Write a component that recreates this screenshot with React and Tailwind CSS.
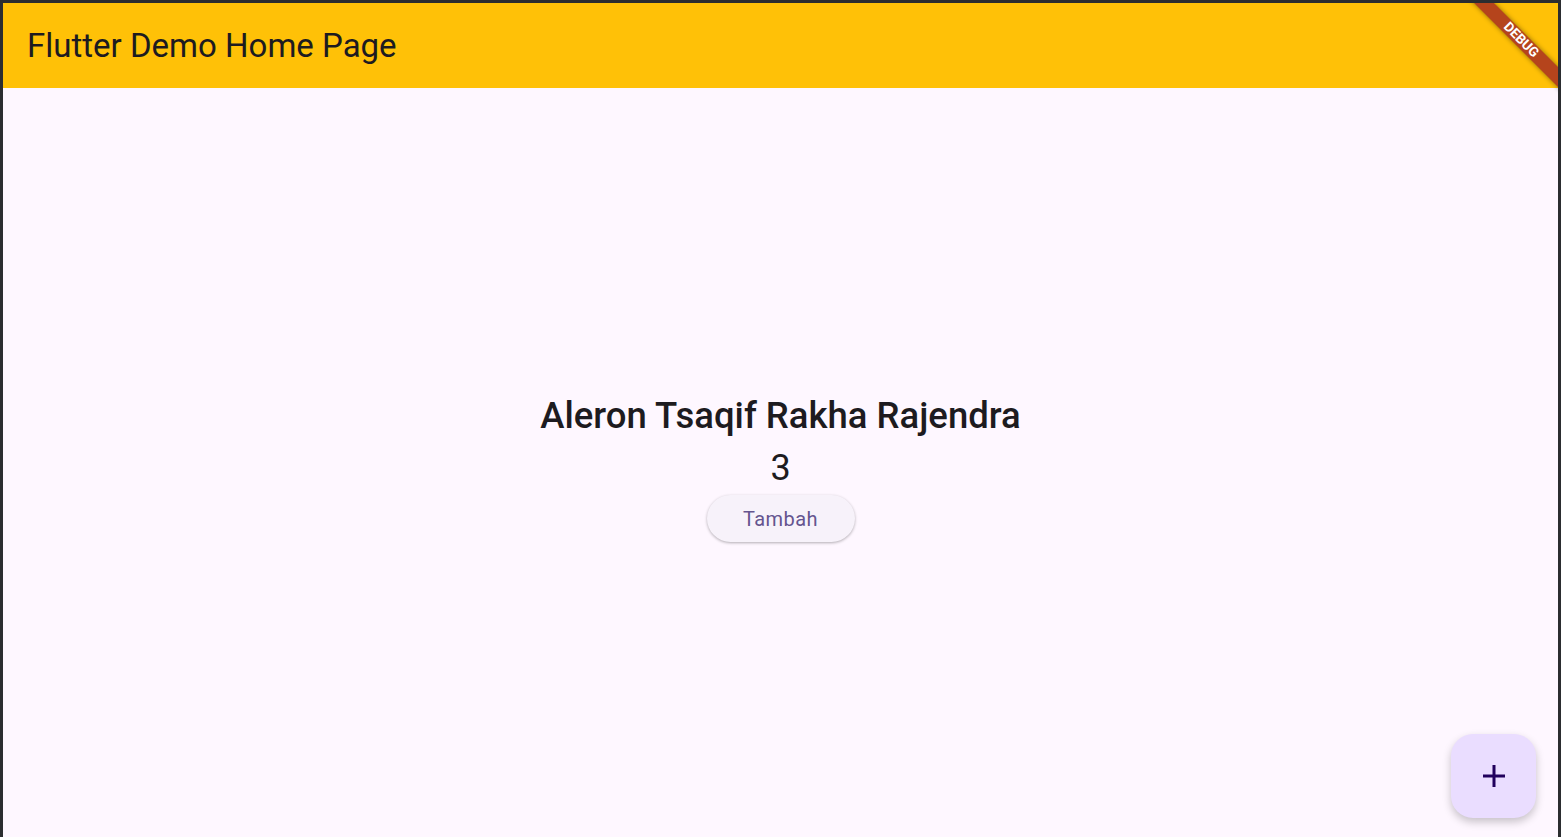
import React, { useState } from 'react';

// Flutter-style debug ribbon in the top-right corner
function DebugBanner() {
  return (
    <div className="pointer-events-none absolute right-0 top-0 h-[110px] w-[110px] overflow-hidden">
      <div className="absolute -left-[2px] top-[30px] flex h-[14px] w-[150px] rotate-45 items-center justify-center bg-[#b5441c] shadow-[0_0_5px_rgba(0,0,0,0.45)]">
        <span className="text-[13.5px] font-bold leading-none text-white">DEBUG</span>
      </div>
    </div>
  );
}

export default function App() {
  const [count, setCount] = useState(3);

  return (
    <div
      className="h-[837px] w-full bg-[#2b2d30] px-[3px] pt-[3px]"
      style={{ fontFamily: 'Roboto, "Noto Sans", sans-serif' }}
    >
      <div className="relative flex h-full flex-col bg-[#fef7ff]">
        {/* App bar */}
        <header className="flex h-[85px] shrink-0 items-center bg-[#ffc107] pl-6">
          <h1 className="text-[33px] font-normal text-[#1d1b20]">Flutter Demo Home Page</h1>
        </header>

        {/* Body */}
        <main className="flex flex-1 flex-col items-center justify-center pt-[12px] text-[#1d1b20]">
          <p className="text-[36.5px] font-medium leading-[42px]">Aleron Tsaqif Rakha Rajendra</p>
          <p className="mt-[10px] text-[36px] font-normal leading-[42px]">{count}</p>
          <button
            onClick={() => setCount(count + 1)}
            className="mt-[6px] flex h-[47px] w-[148px] items-center justify-center rounded-full bg-[#f7f2fa] text-[20px] font-normal tracking-[0.4px] text-[#65558f] shadow-[0_1px_3px_rgba(0,0,0,0.3)]"
          >
            Tambah
          </button>
        </main>

        {/* Floating action button */}
        <button
          onClick={() => setCount(count + 1)}
          className="absolute bottom-[19px] right-[22px] flex h-[84px] w-[85px] items-center justify-center rounded-[22px] bg-[#eaddff] shadow-[0_4px_8px_rgba(0,0,0,0.22)]"
        >
          <svg width="24" height="24" viewBox="0 0 24 24" fill="none">
            <path d="M12 1v22M1 12h22" stroke="#21005d" strokeWidth="3" />
          </svg>
        </button>

        <DebugBanner />
      </div>
    </div>
  );
}
